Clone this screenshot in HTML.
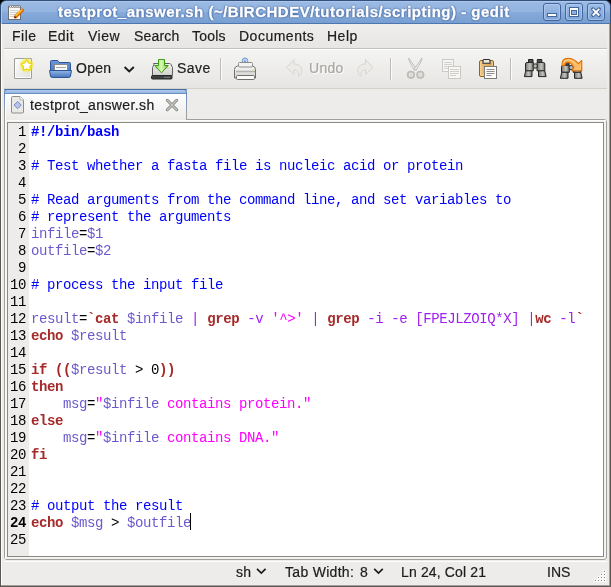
<!DOCTYPE html>
<html><head><meta charset="utf-8">
<style>
*{margin:0;padding:0;box-sizing:border-box}
html,body{width:611px;height:587px;overflow:hidden;background:#000}
body{font-family:"Liberation Sans",sans-serif;font-size:14px;color:#1c1c1c;position:relative}
.r{position:absolute;display:block}
.tx{position:absolute;white-space:nowrap;line-height:17px;will-change:transform;-webkit-text-stroke:0.2px currentColor}
svg{position:absolute;overflow:visible}
.code,.ln{position:absolute;will-change:transform;font-family:"Liberation Mono",monospace;font-size:14px;letter-spacing:-0.4px;line-height:17px;white-space:pre;color:#000}
.ln{text-align:right}
.c{color:#0000ff}
.kb{color:#0000ff;font-weight:bold}
.k{color:#a52a2a;font-weight:bold}
.b{color:#a52a2a;font-weight:bold}
.v{color:#6a5acd}
.p{color:#a020f0}
.s{color:#ff00ff}
</style></head><body>
<!-- window background -->
<div class="r" style="left:0;top:20px;width:611px;height:567px;background:#edeceb"></div>
<!-- title bar -->
<div class="r" style="left:0;top:0;width:611px;height:24px;border-radius:6px 6px 0 0;border:1px solid #34507c;border-bottom:none;background:linear-gradient(#9bbae4 0,#93b4e0 11px,#87abda 11px,#789fd2 22px,#4d75b0 22px,#4d75b0 23px);box-shadow:inset 1px 1px 0 #abc7ec"></div>
<div class="tx" style="left:58px;top:3px;color:#fff;font-weight:bold;font-size:15px;letter-spacing:0.5px;-webkit-text-stroke:0.35px #fff;text-shadow:0 0 1px #2f5391,0 0 2px #2f5391,0 0 2px #3a63a0">testprot_answer.sh (~/BIRCHDEV/tutorials/scripting) - gedit</div>
<!-- title icon -->
<svg style="left:0;top:0" width="30" height="24">
 <rect x="8.5" y="6.5" width="12" height="13" fill="#fafafa" stroke="#6e6e6e" stroke-width="1"/>
 <g fill="#ffffff" stroke="#555" stroke-width="0.6"><circle cx="10.5" cy="6.5" r="1.1"/><circle cx="12.7" cy="6.5" r="1.1"/><circle cx="14.9" cy="6.5" r="1.1"/><circle cx="17.1" cy="6.5" r="1.1"/><circle cx="19.2" cy="6.5" r="1.1"/></g>
 <g stroke="#cfcfcf" stroke-width="1"><line x1="10" y1="10.5" x2="18" y2="10.5"/><line x1="10" y1="12.5" x2="18" y2="12.5"/><line x1="10" y1="14.5" x2="17" y2="14.5"/><line x1="10" y1="16.5" x2="14" y2="16.5"/></g>
 <line x1="22.3" y1="10.2" x2="15.5" y2="16.8" stroke="#d9630a" stroke-width="3.4" stroke-linecap="round"/>
 <line x1="21.8" y1="10" x2="15.8" y2="15.8" stroke="#ffd21e" stroke-width="1.4" stroke-linecap="round"/>
 <path d="M14.2 18.3 L15.0 16.2 L16.3 17.5 Z" fill="#111"/>
</svg>
<!-- window buttons -->
<svg style="left:0;top:0" width="611" height="24" shape-rendering="crispEdges">
 <defs><linearGradient id="bg1" x1="0" y1="0" x2="0" y2="1"><stop offset="0" stop-color="#a0bfe8"/><stop offset="1" stop-color="#7fa4d6"/></linearGradient></defs>
 <g shape-rendering="auto">
 <rect x="543.5" y="3.5" width="17" height="17" rx="2.5" fill="url(#bg1)" stroke="#41659c"/>
 <rect x="565.5" y="3.5" width="17" height="17" rx="2.5" fill="url(#bg1)" stroke="#41659c"/>
 <rect x="587.5" y="3.5" width="17" height="17" rx="2.5" fill="url(#bg1)" stroke="#41659c"/>
 <rect x="544.5" y="4.5" width="15" height="15" rx="2" fill="none" stroke="#b3cdee" stroke-opacity="0.7"/>
 <rect x="566.5" y="4.5" width="15" height="15" rx="2" fill="none" stroke="#b3cdee" stroke-opacity="0.7"/>
 <rect x="588.5" y="4.5" width="15" height="15" rx="2" fill="none" stroke="#b3cdee" stroke-opacity="0.7"/>
 </g>
 <rect x="547" y="13" width="10" height="4" fill="#41659c"/>
 <rect x="548" y="14" width="8" height="2" fill="#ffffff"/>
 <rect x="569" y="7" width="10" height="10" fill="#41659c"/>
 <rect x="570" y="8" width="8" height="8" fill="#ffffff"/>
 <rect x="571" y="10" width="6" height="5" fill="#41659c"/>
 <rect x="572" y="11" width="4" height="3" fill="#8fb0de"/>
 <g shape-rendering="auto">
 <path d="M593 9.2 L599 15.2 M599 9.2 L593 15.2" stroke="#41659c" stroke-width="3.8" stroke-linecap="round"/>
 <path d="M592.7 8.9 L599.3 15.5 M599.3 8.9 L592.7 15.5" stroke="#ffffff" stroke-width="1.9" stroke-linecap="butt"/>
 </g>
</svg>
<!-- window frame borders -->
<div class="r" style="left:0;top:23px;width:1px;height:564px;background:#5b5854"></div>
<div class="r" style="left:1px;top:24px;width:1px;height:562px;background:#fdfdfd"></div>
<div class="r" style="left:610px;top:23px;width:1px;height:564px;background:#5b5854"></div>
<div class="r" style="left:609px;top:24px;width:1px;height:562px;background:#a19f9c"></div>
<div class="r" style="left:0;top:586px;width:611px;height:1px;background:#5b5854"></div>
<div class="r" style="left:1px;top:585px;width:609px;height:1px;background:#a19f9c"></div>
<!-- menubar -->
<div class="r" style="left:4px;top:24px;width:603px;height:24px;background:linear-gradient(#efeeed,#e7e6e4)"></div>
<div class="r" style="left:4px;top:48px;width:603px;height:1px;background:#c6c3be"></div>
<div class="r" style="left:4px;top:49px;width:603px;height:1px;background:#ffffff"></div>
<div class="tx" style="left:12px;top:28px;letter-spacing:0.5px">File</div>
<div class="tx" style="left:48px;top:28px;letter-spacing:0.5px">Edit</div>
<div class="tx" style="left:88px;top:28px;letter-spacing:0.5px">View</div>
<div class="tx" style="left:134px;top:28px;letter-spacing:0.2px">Search</div>
<div class="tx" style="left:192px;top:28px;letter-spacing:0.2px">Tools</div>
<div class="tx" style="left:239px;top:28px;letter-spacing:0.5px">Documents</div>
<div class="tx" style="left:327px;top:28px;letter-spacing:0.5px">Help</div>
<!-- toolbar -->
<div class="r" style="left:4px;top:50px;width:603px;height:38px;background:linear-gradient(#f4f4f3,#e6e5e3)"></div>
<div class="r" style="left:4px;top:88px;width:603px;height:1px;background:#d4d0ca"></div>
<div class="tx" style="left:76px;top:60px;letter-spacing:0.3px">Open</div>
<div class="tx" style="left:177px;top:60px;letter-spacing:0.5px">Save</div>
<div class="tx" style="left:309px;top:60px;letter-spacing:0.3px;color:#a8a5a1;text-shadow:1px 1px 0 #fff">Undo</div>
<div class="r" style="left:220px;top:58px;width:1px;height:22px;background:#bebab5"></div>
<div class="r" style="left:390px;top:58px;width:1px;height:22px;background:#bebab5"></div>
<div class="r" style="left:510px;top:58px;width:1px;height:22px;background:#bebab5"></div>
<div class="r" style="left:221px;top:58px;width:1px;height:22px;background:#fbfbfb"></div>
<div class="r" style="left:391px;top:58px;width:1px;height:22px;background:#fbfbfb"></div>
<div class="r" style="left:511px;top:58px;width:1px;height:22px;background:#fbfbfb"></div>
<svg style="left:0;top:0" width="611" height="90">
 <defs>
  <radialGradient id="glow" cx="0.5" cy="0.5" r="0.5"><stop offset="0" stop-color="#fdf35a"/><stop offset="0.6" stop-color="#f3eb3c" stop-opacity="0.85"/><stop offset="1" stop-color="#f3eb3c" stop-opacity="0"/></radialGradient>
  <linearGradient id="pg" x1="0" y1="0" x2="1" y2="1"><stop offset="0" stop-color="#ffffff"/><stop offset="1" stop-color="#dededb"/></linearGradient>
  <linearGradient id="fdb" x1="0" y1="0" x2="0" y2="1"><stop offset="0" stop-color="#6d98d4"/><stop offset="1" stop-color="#3f6fb5"/></linearGradient>
  <linearGradient id="fdf" x1="0" y1="0" x2="0" y2="1"><stop offset="0" stop-color="#93b6e6"/><stop offset="1" stop-color="#4574ba"/></linearGradient>
  <linearGradient id="dr" x1="0" y1="0" x2="0" y2="1"><stop offset="0" stop-color="#f4f4f2"/><stop offset="1" stop-color="#cfcfcb"/></linearGradient>
  <linearGradient id="ar" x1="0" y1="0" x2="1" y2="0"><stop offset="0" stop-color="#86d24c"/><stop offset="0.5" stop-color="#d8f8b6"/><stop offset="1" stop-color="#6cc236"/></linearGradient>
  <linearGradient id="pr" x1="0" y1="0" x2="0" y2="1"><stop offset="0" stop-color="#fbfbfb"/><stop offset="1" stop-color="#cdcdca"/></linearGradient>
  <linearGradient id="cb" x1="0" y1="0" x2="1" y2="0"><stop offset="0" stop-color="#f0c27a"/><stop offset="1" stop-color="#d9a04c"/></linearGradient>
  <linearGradient id="bn" x1="0" y1="0" x2="1" y2="0"><stop offset="0" stop-color="#737571"/><stop offset="0.55" stop-color="#c4c5c1"/><stop offset="1" stop-color="#6f716d"/></linearGradient>
  <linearGradient id="og" x1="0" y1="0" x2="1" y2="1"><stop offset="0" stop-color="#f7a33a"/><stop offset="1" stop-color="#fbc47a"/></linearGradient>
 </defs>
 <!-- new -->
 <path d="M14.5 59 q0-0.5 0.5-0.5 h16 q0.5 0 0.5 0.5 v19 q0 0.5-0.5 0.5 h-16 q-0.5 0-0.5-0.5 z" fill="url(#pg)" stroke="#9c9c99"/><rect x="15.5" y="59.5" width="15" height="18" fill="none" stroke="#ffffff" stroke-opacity="0.8"/>
 <circle cx="26.7" cy="65.3" r="8" fill="url(#glow)"/>
 <path d="M26.70 59.80 L28.64 62.93 L32.22 63.81 L29.84 66.62 L30.11 70.29 L26.70 68.90 L23.29 70.29 L23.56 66.62 L21.18 63.81 L24.76 62.93 Z" fill="#fff" stroke="#eed400" stroke-width="1.1" stroke-linejoin="round"/>
 <!-- open -->
 <path d="M50.5 76 V61.5 q0-1 1-1 h5.5 q1 0 1.5 1 l0.5 1 h10.5 q1 0 1 1 V76 z" fill="url(#fdb)" stroke="#2c5699"/>
 <rect x="54.5" y="64.5" width="13" height="6" fill="#f7f7f7" stroke="#8a8a8a"/>
 <line x1="56" y1="67.5" x2="66" y2="67.5" stroke="#a9a9a9"/>
 <path d="M49.5 70.5 h22 l-1 5.5 q-0.3 1.5-1.8 1.5 h-16.4 q-1.5 0-1.8-1.5 z" fill="url(#fdf)" stroke="#2c5699"/>
 <path d="M124.6 67 L129.2 71.5 L133.8 67" fill="none" stroke="#1c1c1c" stroke-width="1.9"/>
 <!-- save -->
 <path d="M153.5 63.5 h16 q1 0 1.5 1 l1.5 3 v8 h-20 v-8 l1.5-3 q0.5-1 1.5-1 z" fill="url(#dr)" stroke="#5f5f5d"/>
 <path d="M154 68 h15" stroke="#c6c6c2"/>
 <rect x="151.5" y="75.5" width="20.5" height="3.5" rx="1" fill="#3e4141" stroke="#262828"/>
 <path d="M164 77.3 h6" stroke="#8a8d8d" stroke-width="0.8"/>
 <path d="M158.5 59.5 h6 v6 h3.8 l-6.8 7.3 l-6.8 -7.3 h3.8 z" fill="url(#ar)" stroke="#3e9c12"/>
 <!-- print -->
 <rect x="242.3" y="58" width="5.4" height="8" rx="2.7" fill="#c5d8f2" stroke="#6a95cf"/><path d="M245 60.5 v4" stroke="#4a78b8" stroke-width="1.2"/>
 <path d="M234.5 78 v-8.5 q0-3 3-3.5 l2-0.5 h11 l2 0.5 q3 0.5 3 3.5 v8.5 z" fill="url(#pr)" stroke="#6f6f6d"/>
 <rect x="238.5" y="62.5" width="14" height="4.5" rx="1" fill="#f3f3f1" stroke="#8c8c89"/>
 <path d="M236 71.5 h19" stroke="#b3b3b0" stroke-width="1.5"/>
 <rect x="236.5" y="75.5" width="18" height="4" rx="1" fill="#fafafa" stroke="#6f6f6d"/>
 <circle cx="254" cy="70" r="0.8" fill="#e5d84a"/>
 <!-- undo/redo disabled -->
 <path d="M286.5 67.5 L294 59.5 V63.8 Q301.8 64.5 301.8 70.5 Q301.8 74.5 298.5 76.5 Q299.5 69.8 294 69.8 V74.5 Z" fill="#ecebe7" stroke="#d6d5d0" stroke-width="1"/>
 <path d="M373 67.5 L365.5 59.5 V63.8 Q357.7 64.5 357.7 70.5 Q357.7 74.5 361 76.5 Q360 69.8 365.5 69.8 V74.5 Z" fill="#ecebe7" stroke="#d6d5d0" stroke-width="1"/>
 <!-- cut disabled -->
 <g fill="none" stroke="#bebcb8" stroke-width="1">
  <path d="M408.6 58 Q409 62 414.8 70.5 L416.2 68.6 Q411 61.5 408.6 58 Z" fill="#eeeeec"/>
  <path d="M422 58 Q421.6 62 415.8 70.5 L414.4 68.6 Q419.6 61.5 422 58 Z" fill="#eeeeec"/>
  <circle cx="410.9" cy="74.8" r="3.2" stroke-width="1.8"/><circle cx="420.3" cy="74.8" r="3.2" stroke-width="1.8"/>
  <circle cx="410.9" cy="74.8" r="1" stroke="#d4d2ce"/><circle cx="420.3" cy="74.8" r="1" stroke="#d4d2ce"/>
 </g>
 <!-- copy disabled -->
 <g shape-rendering="crispEdges">
 <rect x="442.5" y="59.5" width="11" height="12" fill="#f6f6f5" stroke="#cbc9c5"/>
 <g fill="#d2d0cc"><rect x="444" y="62" width="8" height="1"/><rect x="444" y="64" width="8" height="1"/><rect x="444" y="66" width="8" height="1"/><rect x="444" y="68" width="5" height="1"/></g>
 <rect x="448.5" y="66.5" width="12" height="12" fill="#f6f6f5" stroke="#cbc9c5"/>
 <g fill="#d2d0cc"><rect x="450" y="69" width="9" height="1"/><rect x="450" y="71" width="9" height="1"/><rect x="450" y="73" width="9" height="1"/><rect x="450" y="75" width="6" height="1"/></g>
 </g>
 <!-- paste -->
 <rect x="479.5" y="60.5" width="14" height="16" rx="1.5" fill="url(#cb)" stroke="#9c620c"/>
 <rect x="480.8" y="61.8" width="11.4" height="13.4" fill="none" stroke="#f8dcaa" stroke-width="0.8"/>
 <path d="M483 63.3 v-2.8 q0-1 1-1 h5 q1 0 1 1 v2.8 z" fill="#e8e8e4" stroke="#2e3030" stroke-width="1.1"/>
 <rect x="484.5" y="66.5" width="12" height="12" fill="#fcfcfc" stroke="#7b7b79"/>
 <g stroke="#8e8e8c"><path d="M486.5 69.5 h8 M486.5 71.5 h8 M486.5 73.5 h8 M486.5 75.5 h5"/></g>
 <!-- find -->
 <g stroke="#262726" stroke-width="1" stroke-linejoin="round">
  <rect x="528.5" y="59.5" width="4.5" height="3.5" fill="#4a4b4a"/>
  <rect x="537.3" y="59.5" width="4.5" height="3.5" fill="#4a4b4a"/>
  <path d="M525.5 64 q0-1.5 1.5-1.5 h6.3 v8.3 h-7.8 z" fill="url(#bn)"/>
  <path d="M544.8 64 q0-1.5-1.5-1.5 h-6.3 v8.3 h7.8 z" fill="url(#bn)"/>
  <path d="M525.7 70.8 h6.3 v5.8 h-7.6 z" fill="url(#bn)"/>
  <path d="M538.5 70.8 h6.3 l1.3 5.8 h-7.6 z" fill="url(#bn)"/>
  <circle cx="535.2" cy="66" r="2.2" fill="#b5b6b2"/>
 </g>
 <!-- find & replace -->
 <g stroke="#262726" stroke-width="1" stroke-linejoin="round">
  <rect x="565" y="62" width="4" height="3.3" fill="#4a4b4a"/>
  <path d="M561.5 66.8 q0-1.5 1.5-1.5 h6.3 v7 h-7.8 z" fill="url(#bn)"/>
  <path d="M581 66.8 q0-1.5-1.5-1.5 h-6.3 v7 h7.8 z" fill="url(#bn)"/>
  <path d="M561.7 72.3 h6.3 v6 h-7.6 z" fill="url(#bn)"/>
  <path d="M574.5 72.3 h6.3 l1.3 6 h-7.6 z" fill="url(#bn)"/>
  <circle cx="571.2" cy="67.6" r="2.2" fill="#b5b6b2"/>
 </g>
 <path d="M562 65.5 Q561.5 58.3 568 58.2 Q574 58.2 578.5 63.7 L581.7 60.5 L581.8 70.8 L572 70.8 L573.8 67.3 Q571 62.3 567.5 62.3 Q565 62.5 564.8 65.5 Z" fill="url(#og)" stroke="#e06f00" stroke-width="1.1" stroke-linejoin="round"/>
 <path d="M563.5 63 Q565 59.5 569 59.8 Q573 60.3 576 64.5" fill="none" stroke="#fde0b8" stroke-width="0.9"/>
</svg>
<!-- notebook -->
<div class="r" style="left:4px;top:119px;width:603px;height:441px;border:1px solid #a29e99;border-radius:0 3px 3px 3px;background:#f3f3f2"></div>
<div class="r" style="left:5px;top:120px;width:601px;height:439px;border:1px solid #fbfbfb;border-width:1px 0 0 1px"></div>
<!-- tab -->
<div class="r" style="left:4px;top:89px;width:183px;height:31px;border-radius:3px 3px 0 0;background:linear-gradient(#5d83bb,#7f97bb 40%,#a29e99 85%)"></div>
<div class="r" style="left:5px;top:94px;width:181px;height:26px;background:linear-gradient(#fefefe,#ecebea)"></div>
<div class="r" style="left:5px;top:90px;width:181px;height:4px;border-radius:2px 2px 0 0;background:linear-gradient(#a9c7ec 0,#a3c0e8 2px,#8fb2e2 3px,#6f8fbb 3px)"></div>
<div class="r" style="left:4px;top:89px;width:183px;height:1px;border-radius:3px 3px 0 0;background:#4a6fa5"></div>
<div class="r" style="left:5px;top:94px;width:1px;height:26px;background:#fff"></div>
<svg style="left:8px;top:94px" width="20" height="22">
 <path d="M4.5 2.5 h7.5 l3.5 3.5 v12 q0 1-1 1 h-10 q-1 0-1-1 v-14.5 q0-1 1-1 z" fill="#e9eae6" stroke="#8d8d8a"/>
 <path d="M12 2.5 v3.5 h3.5" fill="#fff" stroke="#b5b5b2"/>
 <path d="M9.6 7.5 L13.2 11.1 L9.6 14.7 L6 11.1 Z" fill="#b9c4e6" stroke="#7788c8"/>
</svg>
<div class="tx" style="left:30px;top:97px;letter-spacing:0.4px">testprot_answer.sh</div>
<svg style="left:164px;top:97px" width="16" height="16">
 <path d="M3.3 3.3 L12.7 12.7 M12.7 3.3 L3.3 12.7" stroke="#858780" stroke-width="3" stroke-linecap="round"/>
 <path d="M3.3 3.3 L12.7 12.7 M12.7 3.3 L3.3 12.7" stroke="#c4c6c0" stroke-width="1.3" stroke-linecap="round"/>
</svg>
<!-- editor frame -->
<div class="r" style="left:7px;top:122px;width:597px;height:435px;border:1px solid #8d8984;background:#fff"></div>
<div class="r" style="left:8px;top:123px;width:21px;height:433px;background:#edeceb"></div>
<div class="ln" style="left:8px;top:124px;width:18px">1
2
3
4
5
6
7
8
9
10
11
12
13
14
15
16
17
18
19
20
21
22
23
<b>24</b>
25</div>
<div class="code" style="left:31px;top:124px"><span class="kb">#!/bin/bash</span>

<span class="c"># Test whether a fasta file is nucleic acid or protein</span>

<span class="c"># Read arguments from the command line, and set variables to</span>
<span class="c"># represent the arguments</span>
<span class="v">infile</span>=<span class="v">$1</span>
<span class="v">outfile</span>=<span class="v">$2</span>

<span class="c"># process the input file</span>

<span class="v">result</span>=<span class="b">`</span><span class="k">cat</span> <span class="v">$infile</span> <span class="p">|</span> <span class="k">grep</span> <span class="p">-v</span> <span class="s">'^&gt;'</span> <span class="p">|</span> <span class="k">grep</span> <span class="p">-i -e [FPEJLZOIQ*X] |</span><span class="k">wc</span> <span class="p">-l</span><span class="b">`</span>
<span class="k">echo</span> <span class="v">$result</span>

<span class="k">if</span> <span class="b">((</span><span class="v">$result</span> &gt; 0<span class="b">))</span>
<span class="k">then</span>
    <span class="v">msg</span>=<span class="s">"</span><span class="v">$infile</span><span class="s"> contains protein."</span>
<span class="k">else</span>
    <span class="v">msg</span>=<span class="s">"</span><span class="v">$infile</span><span class="s"> contains DNA."</span>
<span class="k">fi</span>


<span class="c"># output the result</span>
<span class="k">echo</span> <span class="v">$msg</span> &gt; <span class="v">$outfile</span></div>
<div class="r" style="left:190px;top:513px;width:1px;height:17px;background:#000"></div>
<!-- status bar -->
<div class="r" style="left:4px;top:561px;width:603px;height:1px;background:#fdfdfd"></div>
<div class="tx" style="left:236px;top:564px;letter-spacing:0.3px">sh</div>
<svg style="left:0;top:0" width="611" height="587">
 <path d="M257 568.8 L261.3 573 L265.6 568.8" fill="none" stroke="#1c1c1c" stroke-width="1.7"/>
 <path d="M374.2 568.8 L378.5 573 L382.8 568.8" fill="none" stroke="#1c1c1c" stroke-width="1.7"/>
</svg>
<div class="tx" style="left:285px;top:564px;letter-spacing:0.3px">Tab Width:</div>
<div class="tx" style="left:360px;top:564px;letter-spacing:0.3px">8</div>
<div class="tx" style="left:401px;top:564px;letter-spacing:0.15px">Ln 24, Col 21</div>
<div class="tx" style="left:547px;top:564px;letter-spacing:0px">INS</div>
<svg style="left:0;top:0" width="611" height="587" shape-rendering="crispEdges">
 <g fill="#ffffff" opacity="0.5"><rect x="603" y="570" width="3" height="3"/><rect x="600" y="573" width="3" height="3"/><rect x="603" y="573" width="3" height="3"/><rect x="597" y="576" width="3" height="3"/><rect x="600" y="576" width="3" height="3"/><rect x="603" y="576" width="3" height="3"/><rect x="594" y="579" width="3" height="3"/><rect x="597" y="579" width="3" height="3"/><rect x="600" y="579" width="3" height="3"/><rect x="603" y="579" width="3" height="3"/></g>
 <g fill="#ffffff"><rect x="604" y="571" width="2" height="2"/><rect x="601" y="574" width="2" height="2"/><rect x="604" y="574" width="2" height="2"/><rect x="598" y="577" width="2" height="2"/><rect x="601" y="577" width="2" height="2"/><rect x="604" y="577" width="2" height="2"/><rect x="595" y="580" width="2" height="2"/><rect x="598" y="580" width="2" height="2"/><rect x="601" y="580" width="2" height="2"/><rect x="604" y="580" width="2" height="2"/></g>
 <g fill="#858380"><rect x="604" y="571" width="1" height="1"/><rect x="601" y="574" width="1" height="1"/><rect x="604" y="574" width="1" height="1"/><rect x="598" y="577" width="1" height="1"/><rect x="601" y="577" width="1" height="1"/><rect x="604" y="577" width="1" height="1"/><rect x="595" y="580" width="1" height="1"/><rect x="598" y="580" width="1" height="1"/><rect x="601" y="580" width="1" height="1"/><rect x="604" y="580" width="1" height="1"/></g>
</svg>
</body></html>
